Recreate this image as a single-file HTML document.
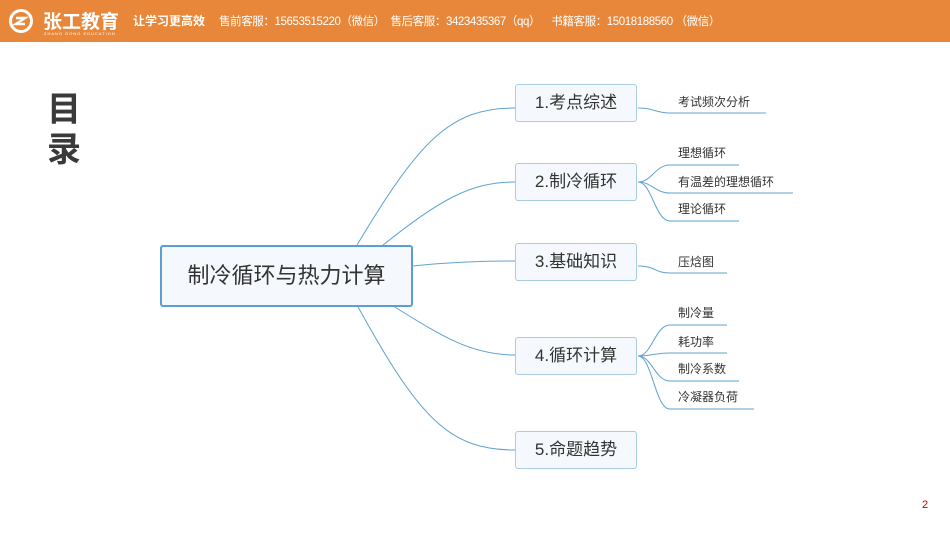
<!DOCTYPE html>
<html><head><meta charset="utf-8"><style>
body{margin:0;width:950px;height:535px;background:#fff;position:relative;overflow:hidden;font-family:"Liberation Sans","Noto Sans CJK SC",sans-serif}
.hdr{position:absolute;left:0;top:0;width:950px;height:42px;background:#e8873a;color:#fff}
.box{position:absolute;left:515px;width:120px;height:36px;border:1px solid #a9cbe3;border-radius:3px;background:#f5f9fd;color:#333;font-size:17px;text-align:center;line-height:36px}
.leaf{position:absolute;left:678px;font-size:12px;color:#333;line-height:14px}
</style></head><body>
<div class="hdr">
<svg style="position:absolute;left:8px;top:8px" width="26" height="26"><circle cx="13" cy="13" r="12" fill="#fff"/><circle cx="13" cy="13" r="9" fill="#e8873a"/><path d="M8 10h9l-9 6h9" stroke="#fff" stroke-width="2.5" fill="none"/></svg>
<div style="position:absolute;left:43px;top:7px;font-size:19px;font-weight:bold;letter-spacing:0px">张工教育</div>
<div style="position:absolute;left:44px;top:31px;font-size:4px;letter-spacing:1px">ZHANG GONG EDUCATION</div>
<div style="position:absolute;left:133px;top:12px;font-size:12px;font-weight:bold">让学习更高效</div>
<div style="position:absolute;left:219px;top:13px;font-size:11.5px;letter-spacing:-0.4px;white-space:pre">售前客服：15653515220（微信）  售后客服：3423435367（qq）    书籍客服：15018188560 （微信）</div>
</div>
<div style="position:absolute;left:47px;top:90px;font-size:34px;font-weight:bold;color:#3a3a3a;line-height:40px;width:40px">目<br>录</div>
<svg style="position:absolute;left:0;top:0" width="950" height="535" fill="none" stroke="#5fa3cf" stroke-width="1">
<path d="M357 245C420 140 450 108 515 108"/>
<path d="M383 245C440 200 470 182 515 182"/>
<path d="M413 266C450 262 480 261 515 261"/>
<path d="M390 304C440 335 470 355 515 355"/>
<path d="M357 305C420 420 450 450 515 450"/>
<path d="M638 108C655 108 655 113 670 113H766"/>
<path d="M638 182C652 182 655 165 670 165H739"/>
<path d="M638 182C652 182 655 193 670 193H793"/>
<path d="M638 182C652 182 655 221 670 221H739"/>
<path d="M638 266C655 266 655 273 670 273H727"/>
<path d="M638 356C652 356 655 325 670 325H727"/>
<path d="M638 356C652 356 655 353 670 353H727"/>
<path d="M638 356C652 356 655 381 670 381H739"/>
<path d="M638 356C652 356 655 409 670 409H754"/>
</svg>
<div style="position:absolute;left:160px;top:245px;width:249px;height:58px;border:2px solid #5a9fd0;border-radius:3px;background:#f5f9fd;font-size:22px;color:#333;text-align:center;line-height:58px">制冷循环与热力计算</div>
<div class="box" style="top:84px">1.考点综述</div>
<div class="box" style="top:163px">2.制冷循环</div>
<div class="box" style="top:243px">3.基础知识</div>
<div class="box" style="top:337px">4.循环计算</div>
<div class="box" style="top:431px">5.命题趋势</div>
<div class="leaf" style="top:95px">考试频次分析</div>
<div class="leaf" style="top:146px">理想循环</div>
<div class="leaf" style="top:175px">有温差的理想循环</div>
<div class="leaf" style="top:202px">理论循环</div>
<div class="leaf" style="top:255px">压焓图</div>
<div class="leaf" style="top:306px">制冷量</div>
<div class="leaf" style="top:335px">耗功率</div>
<div class="leaf" style="top:362px">制冷系数</div>
<div class="leaf" style="top:390px">冷凝器负荷</div>
<div style="position:absolute;left:922px;top:499px;font-size:11px;color:#c00000">2</div>
</body></html>
